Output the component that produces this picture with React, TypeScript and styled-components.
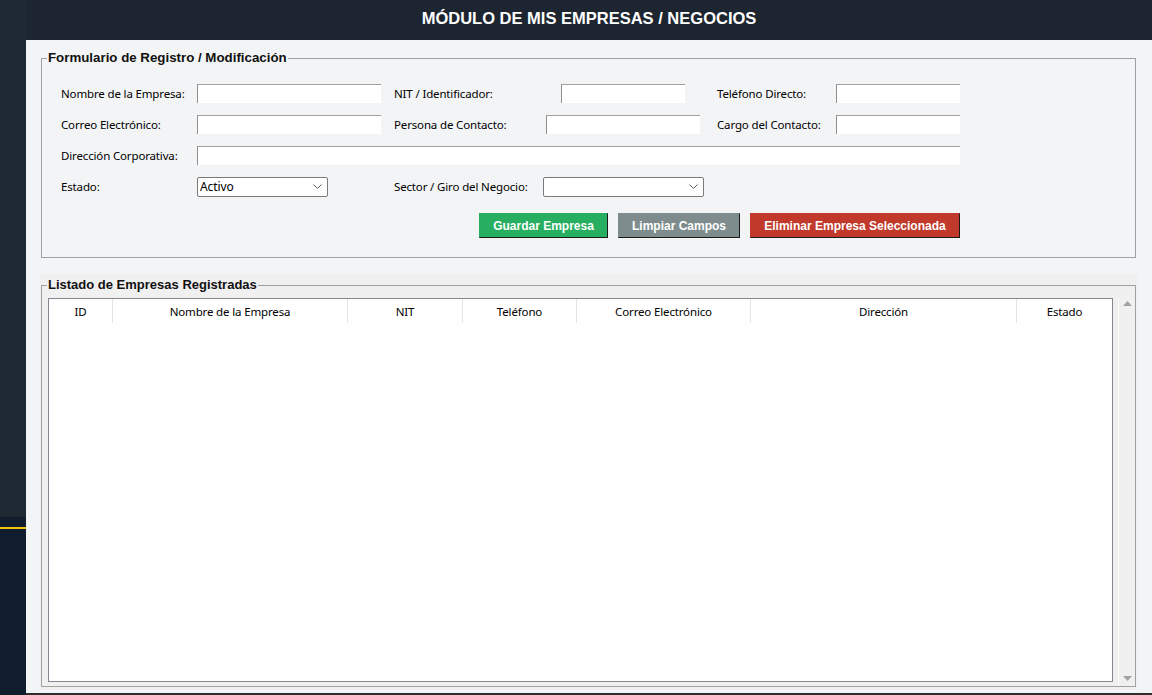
import React from 'react'
import styled, { createGlobalStyle } from 'styled-components'

const GlobalStyle = createGlobalStyle`
  html, body {
    margin: 0;
    padding: 0;
  }
  body {
    width: 1152px;
    height: 695px;
    overflow: hidden;
    background: #1e2732;
    font-family: "Noto Sans", "Open Sans", sans-serif;
  }
`

const columns = [
    { label: 'ID', w: 64 },
    { label: 'Nombre de la Empresa', w: 235 },
    { label: 'NIT', w: 115 },
    { label: 'Teléfono', w: 114 },
    { label: 'Correo Electrónico', w: 174 },
    { label: 'Dirección', w: 266 },
    { label: 'Estado', w: 95 },
]

const Chevron = () => (
    <svg width="9" height="5" viewBox="0 0 9 5">
        <polyline points="0.5,0.5 4.5,4.5 8.5,0.5" fill="none" stroke="#5a5a5a" strokeWidth="1" />
    </svg>
)

const Arrow = ({ down }: { down?: boolean }) => (
    <svg width="9" height="5" viewBox="0 0 9 5">
        <polygon points={down ? '0,0 9,0 4.5,5' : '0,5 9,5 4.5,0'} fill="#a3a3a3" />
    </svg>
)

const App = () => {
    return (
        <Shell>
            <GlobalStyle />
            <Sidebar>
                <SidebarTop />
                <SidebarAccent />
            </Sidebar>
            <Main>
                <Header>MÓDULO DE MIS EMPRESAS / NEGOCIOS</Header>
                <Content>
                    <Group>
                        <Legend $size={13.3}>Formulario de Registro / Modificación</Legend>
                        <FormBody>
                            <FormGrid>
                                <Label>Nombre de la Empresa:</Label>
                                <TextInput $w={184} />
                                <Label>NIT / Identificador:</Label>
                                <TextInput $w={124} $center />
                                <Label $indent>Teléfono Directo:</Label>
                                <TextInput />

                                <Label>Correo Electrónico:</Label>
                                <TextInput $w={184} />
                                <Label>Persona de Contacto:</Label>
                                <TextInput $w={154} $center />
                                <Label $indent>Cargo del Contacto:</Label>
                                <TextInput />

                                <Label>Dirección Corporativa:</Label>
                                <TextInput $span />

                                <Label>Estado:</Label>
                                <Combo $w={131}>
                                    <span>Activo</span>
                                    <Chevron />
                                </Combo>
                                <Label>Sector / Giro del Negocio:</Label>
                                <Combo $w={161} $center>
                                    <span></span>
                                    <Chevron />
                                </Combo>

                                <ButtonRow>
                                    <ActionButton $bg="#27ae60" $w={129}>Guardar Empresa</ActionButton>
                                    <ActionButton $bg="#7f8c8d" $w={122}>Limpiar Campos</ActionButton>
                                    <ActionButton $bg="#c0392b" $w={210}>Eliminar Empresa Seleccionada</ActionButton>
                                </ButtonRow>
                            </FormGrid>
                        </FormBody>
                    </Group>

                    <ListPanel>
                        <Group>
                            <Legend $size={13}>Listado de Empresas Registradas</Legend>
                            <ListBody>
                                <Table>
                                    <HeadRow>
                                        {columns.map((c, i) => (
                                            <HeadCell key={c.label} $last={i === columns.length - 1}>{c.label}</HeadCell>
                                        ))}
                                    </HeadRow>
                                </Table>
                                <Scrollbar>
                                    <Arrow />
                                    <Arrow down />
                                </Scrollbar>
                            </ListBody>
                        </Group>
                    </ListPanel>
                </Content>
            </Main>
        </Shell>
    )
}

const Shell = styled.div`
  display: flex;
  width: 1152px;
  height: 695px;
`
const Sidebar = styled.aside`
  width: 26px;
  display: flex;
  flex-direction: column;
  background: #111c2d;
`
const SidebarTop = styled.div`
  height: 517px;
  background: #1e2833;
`
const SidebarAccent = styled.div`
  height: 2px;
  margin-top: 10px;
  background: #f1c40f;
`
const Main = styled.main`
  flex: 1;
  display: flex;
  flex-direction: column;
  border-bottom: 2px solid #2e2e2e;
`
const Header = styled.header`
  height: 40px;
  box-sizing: border-box;
  padding-bottom: 4px;
  display: flex;
  align-items: center;
  justify-content: center;
  background: #1d2531;
  color: #ffffff;
  font: bold 16.5px "Liberation Sans", Arial, sans-serif;
`
const Content = styled.div`
  flex: 1;
  display: flex;
  flex-direction: column;
  padding: 10px 16px 0 15px;
  background: #f3f4f6;
`
const Group = styled.fieldset`
  margin: 0;
  padding: 0;
  min-width: 0;
  border: 1px solid #a0a0a0;
`
const Legend = styled.legend<{ $size: number }>`
  margin-left: 5px;
  padding: 0 1px;
  font: bold ${p => p.$size}px/16px "Liberation Sans", Arial, sans-serif;
  color: #111111;
`
const FormBody = styled.div`
  padding: 18px 0 19px 19px;
`
const FormGrid = styled.div`
  display: grid;
  grid-template-columns: 136px 197px 137px 184px 121px 124px;
  grid-template-rows: repeat(4, 19px) 30px;
  row-gap: 12px;
  align-items: center;
  font-size: 11.5px;
  letter-spacing: -0.15px;
  color: #000000;
`
const Label = styled.label<{ $indent?: boolean }>`
  padding-left: ${p => (p.$indent ? '2px' : '0')};
  white-space: nowrap;
`
const TextInput = styled.input<{ $w?: number; $center?: boolean; $span?: boolean }>`
  box-sizing: border-box;
  height: 19px;
  width: ${p => (p.$w ? `${p.$w}px` : '100%')};
  justify-self: ${p => (p.$center ? 'center' : 'start')};
  grid-column: ${p => (p.$span ? '2 / -1' : 'auto')};
  margin: 0;
  padding: 0 2px;
  border: none;
  border-top: 1px solid #a0a0a0;
  border-left: 1px solid #8f8f8f;
  background: #ffffff;
  outline: none;
`
const Combo = styled.div<{ $w: number; $center?: boolean }>`
  box-sizing: border-box;
  height: 20px;
  width: ${p => p.$w}px;
  justify-self: ${p => (p.$center ? 'center' : 'start')};
  display: flex;
  align-items: center;
  justify-content: space-between;
  padding: 0 5px 0 2px;
  border: 1px solid #7a7a7a;
  border-radius: 2px;
  background: #ffffff;
  font-size: 12px;
  letter-spacing: -0.1px;
`
const ButtonRow = styled.div`
  grid-column: 1 / -1;
  justify-self: end;
  align-self: end;
  display: flex;
  gap: 10px;
`
const ActionButton = styled.button<{ $bg: string; $w: number }>`
  box-sizing: border-box;
  width: ${p => p.$w}px;
  height: 25px;
  padding: 0;
  background: ${p => p.$bg};
  color: #ffffff;
  font: bold 12px "Liberation Sans", Arial, sans-serif;
  letter-spacing: 0;
  border: 1px solid ${p => p.$bg};
  border-right-color: #1a1a1a;
  border-bottom-color: #1a1a1a;
`
const ListPanel = styled.section`
  margin: 16px -1px 0 -1px;
  padding: 3px 1px 3px 1px;
  background: #f0f0f0;
`
const ListBody = styled.div`
  display: flex;
  align-items: flex-start;
  height: 388px;
  padding: 5px 0 0 6px;
`
const Table = styled.div`
  box-sizing: border-box;
  width: 1065px;
  height: 384px;
  border: 1px solid #828790;
  background: #ffffff;
`
const HeadRow = styled.div`
  display: grid;
  grid-template-columns: ${columns.map(c => `${c.w}px`).join(' ')};
  height: 24px;
`
const HeadCell = styled.div<{ $last?: boolean }>`
  display: flex;
  align-items: center;
  justify-content: center;
  border-right: ${p => (p.$last ? 'none' : '1px solid #e5e5e5')};
  font-size: 11.5px;
  letter-spacing: -0.15px;
  color: #000000;
`
const Scrollbar = styled.div`
  box-sizing: border-box;
  width: 16px;
  height: 388px;
  margin-left: 5px;
  display: flex;
  flex-direction: column;
  align-items: center;
  justify-content: space-between;
  padding: 3px 0 5px 1px;
  border-left: 1px solid #ffffff;
  background: #f0f0f0;
`

export default App
